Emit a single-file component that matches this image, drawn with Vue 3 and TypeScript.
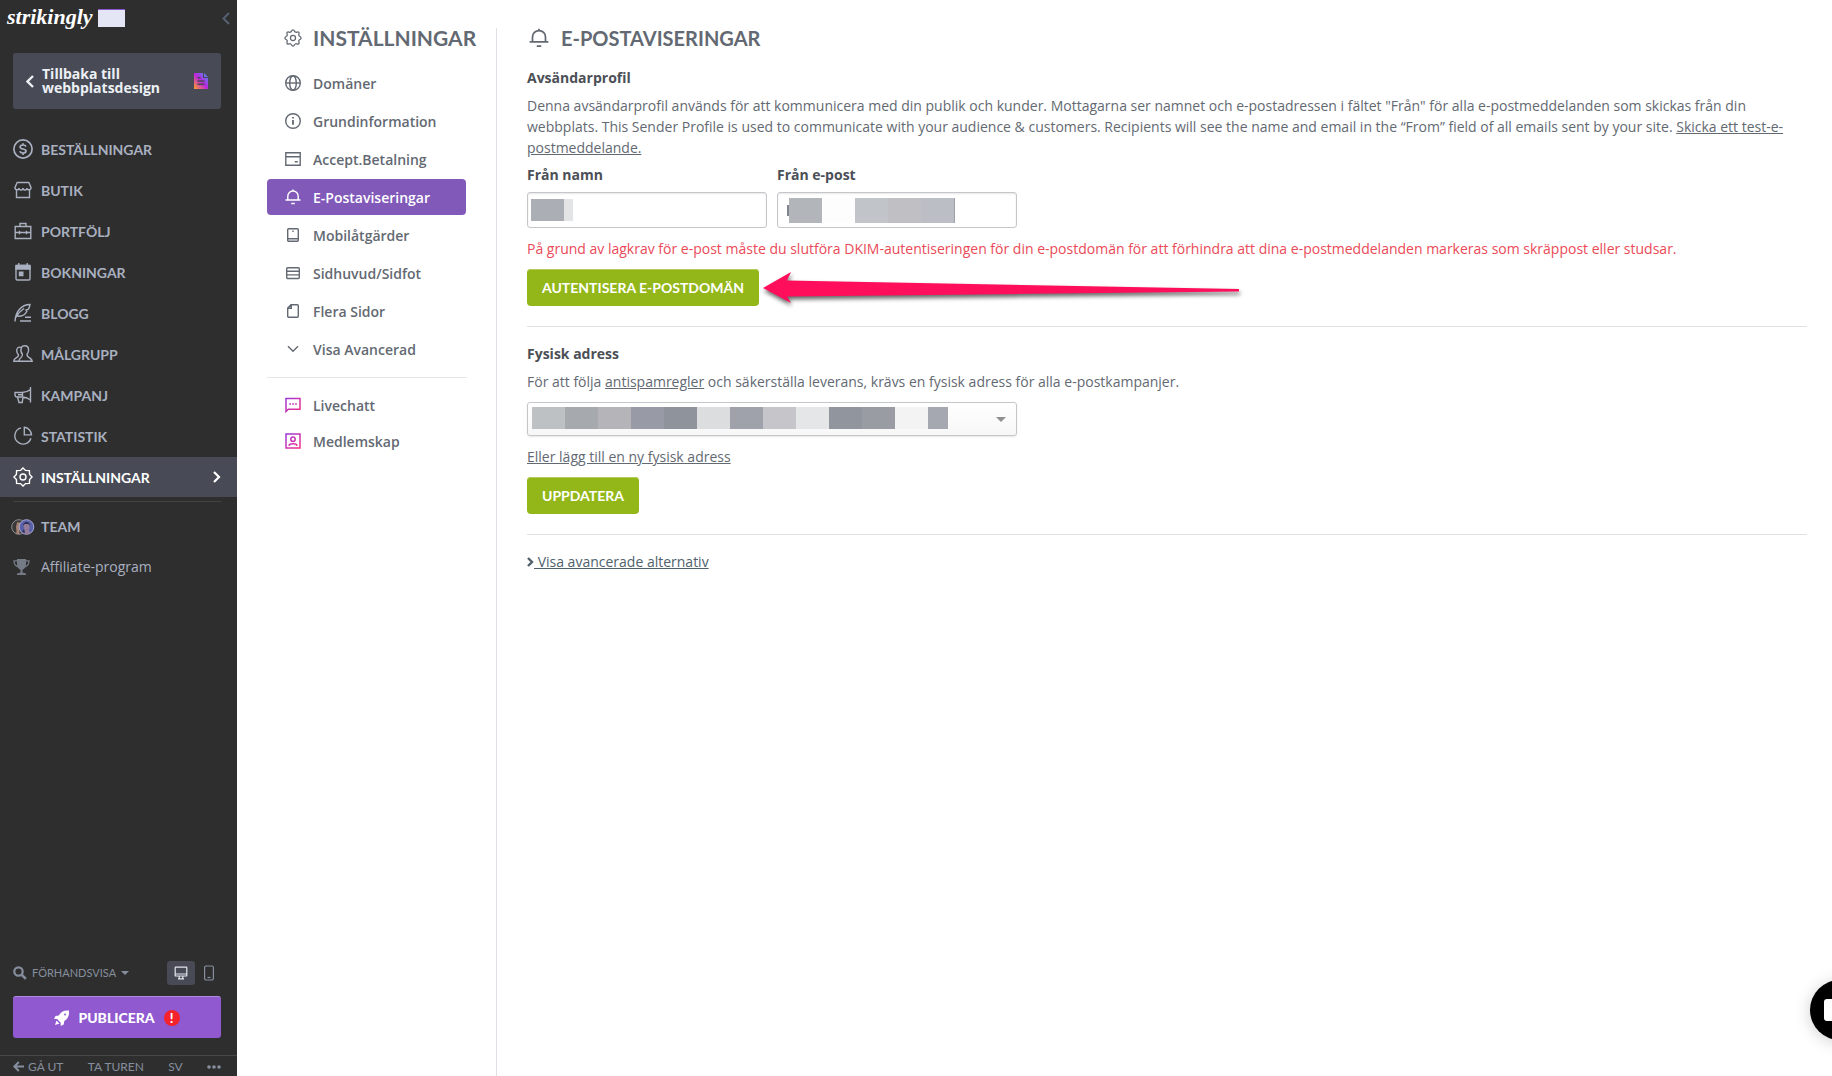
<script setup lang="ts">
import { ref } from 'vue'

interface MenuItem {
  label: string
  icon: string
  active?: boolean
}

const mainMenu: MenuItem[] = [
  {
    label: 'BESTÄLLNINGAR',
    icon: '<circle cx="10" cy="10" r="9.1" stroke-width="1.700"/><path stroke-width="1.700" d="M13 7.6C12.6 6.5 11.5 6 10 6c-1.700 0-2.900.7-2.900 2s1.200 1.700 2.900 2 3 .7 3 2-1.300 2-3 2-2.800-.6-3.200-1.700M10 4.200V6m0 8v1.900"/>',
  },
  {
    label: 'BUTIK',
    icon: '<path d="M4.200 2.500h11.600l2.200 5c0 3-4 3-4 .5 0 2.700-4 2.700-4 0 0 2.700-4 2.700-4 0 0 2.500-4 2.500-4-.5zM3.500 10v7.500h13V10"/>',
  },
  {
    label: 'PORTFÖLJ',
    icon: '<path d="M2.200 5.500h15.600v12H2.200zM7 5.500v-3h6v3M2.200 11.500h15.600M6.500 9.800v3.400M13.500 9.800v3.400"/>',
  },
  {
    label: 'BOKNINGAR',
    icon: '<rect x="3" y="3.500" width="14" height="14.500" rx="1.200"/><path fill="currentColor" d="M3 3.500h14v3.500H3zM6.500 10.300h3.300v3.300H6.500z"/><path d="M5.800 1v3M14.200 1v3"/>',
  },
  {
    label: 'BLOGG',
    icon: '<path d="M2 18.500C2.500 9 8 1.500 17 1.500c-.2 2.300-.8 3.800-2 5l-2 .6 1 .9c-2 4.500-5.500 5.500-9.500 5.300M2.800 14.500C5 10.500 8 7.500 11 5.500M12 14.200h6M7 18h11" />',
  },
  {
    label: 'MÅLGRUPP',
    icon: '<path d="M11.800 1.800c2.500 0 3.800 1.700 3.800 4.200 0 2-.8 3.300-1.500 4.200-.4 2.400.7 2.800 2.700 3.800 1.600.8 2.300 1.600 2.400 3.300H.8c0-1.700.7-2.500 2-3.200 2.300-1.200 3-1.700 2.600-3.500C4.500 9.800 3.700 8.700 3.700 7c0-2.400 1.200-3.900 3-3.900.8 0 1.200.2 1.600.5.500-1.100 1.700-1.800 3.500-1.800zM8.300 3.600C7.500 6 8 8.500 9.400 10.200c.4 2.300-.4 2.800-1.800 3.800-1.200.8-1.600 1.700-1.600 3.300"/>',
  },
  {
    label: 'KAMPANJ',
    icon: '<path d="M17.500 2v15.500M17.500 4.500C15 6.500 12.500 7.500 9 7.500H2v2.200c0 1.500.9 2.300 2.300 2.300H9c3.500 0 6 1 8.500 3M9.500 7.500V12M4.500 12l1.500 5.500h3.200L10 12M5 9.800h4"/>',
  },
  {
    label: 'STATISTIK',
    icon: '<path d="M8 1.900a8.200 8.200 0 1 0 9.900 10.300M11.300 1.300a8 8 0 0 1 7.200 7.600h-7.200z"/>',
  },
  {
    label: 'INSTÄLLNINGAR',
    active: true,
    icon: '<circle cx="10" cy="10" r="3"/><path d="M10 .9l2.500 2.500 3.900.2.200 3.900L19.100 10l-2.500 2.500-.2 3.900-3.900.2L10 19.100l-2.500-2.500-3.900-.2-.2-3.900L.9 10l2.500-2.500.2-3.900 3.900-.2z"/>',
  },
]

const settingsMenu: MenuItem[] = [
  {
    label: 'Domäner',
    icon: '<circle cx="8" cy="8" r="7.300"/><ellipse cx="8" cy="8" rx="3.300" ry="7.300"/><path d="M1 8h14"/>',
  },
  {
    label: 'Grundinformation',
    icon: '<circle cx="8" cy="8" r="7.300"/><path d="M8 7v4.800M8 4v1.600" stroke-width="1.800"/>',
  },
  {
    label: 'Accept.Betalning',
    icon: '<path d="M.8 1.700h14.400v12.600H.8zM.8 5.700h14.400M9.800 10.700h3"/>',
  },
  {
    label: 'E-Postaviseringar',
    active: true,
    icon: '<path d="M.5 11h15M2.800 11V7.200a5.200 5.200 0 0 1 10.400 0V11M8 .5V2M6.200 14.500h3.600"/>',
  },
  {
    label: 'Mobilåtgärder',
    icon: '<rect x="2.700" y="1.700" width="10.600" height="12.600" rx="1"/><path d="M3 11.800h10M7.300 4.300h1.400"/>',
  },
  {
    label: 'Sidhuvud/Sidfot',
    icon: '<rect x="1.700" y="2.700" width="12.600" height="10.800" rx="1"/><path d="M1.700 6.200h12.600M1.700 9.900h12.600"/>',
  },
  {
    label: 'Flera Sidor',
    icon: '<path d="M6 1.700h6.300a1 1 0 0 1 1 1v10.600a1 1 0 0 1-1 1H3.700a1 1 0 0 1-1-1V5zM6.300 2v3.300H3"/>',
  },
  {
    label: 'Visa Avancerad',
    icon: '<path d="M3 5.200l5 5 5-5"/>',
  },
]

const addOns: MenuItem[] = [
  {
    label: 'Livechatt',
    icon: '<path d="M1 14.500V1.500h14v10.700H3.300zM4.300 7h1.700M7.200 7h1.700M10.100 7h1.700"/>',
  },
  {
    label: 'Medlemskap',
    icon: '<rect x="1" y="1" width="14" height="14"/><circle cx="8" cy="6.200" r="2.200"/><path d="M3.800 12.800c1-2.600 7.400-2.600 8.400 0"/>',
  },
]

const bell = settingsMenu[3].icon

const addressBlocks: string[] = [
  '#bdc1c4', '#a6a9ae', '#b4b4b9', '#989ba5', '#8f939c', '#dcdddf', '#9fa2aa',
  '#c5c5ca', '#e5e6e8', '#91959e', '#999ca3', '#f3f3f3', '#a5a8b1',
]

const senderName = ref('')
const senderEmail = ref('')
const address = ref('')
</script>

<template>
  <div class="app">
    <aside class="sidebar">
      <header class="brand">
        <a href="#" class="logo">strikingly</a>
        <span class="plan"></span>
        <button class="collapse" type="button" aria-label="Fäll ihop">
          <svg width="8" height="13" viewBox="0 0 8 13"><path d="M7 1L1.500 6.500 7 12" fill="none" stroke="currentColor" stroke-width="2" /></svg>
        </button>
      </header>

      <a href="#" class="back">
        <svg width="8" height="13" viewBox="0 0 8 13"><path d="M7 1L1.500 6.500 7 12" fill="none" stroke="currentColor" stroke-width="2.400" /></svg>
        <span class="back-text">Tillbaka till webbplatsdesign</span>
        <svg width="14" height="16" viewBox="0 0 14 16">
          <defs>
            <linearGradient id="page" x1="0" y1="1" x2="1" y2="0">
              <stop offset="0" stop-color="#ffa321" /><stop offset=".5" stop-color="#bd24df" /><stop offset="1" stop-color="#4299f5" />
            </linearGradient>
          </defs>
          <path fill="url(#page)" d="M0 0h9v5h5v11H0zM10 0l4 4h-4z" />
          <path stroke="#484b56" stroke-width="1.500" d="M3.500 4.800h3M3.500 8h7M3.500 11.200h7" />
        </svg>
      </a>

      <nav class="main-nav">
        <a v-for="item in mainMenu" :key="item.label" href="#" class="nav-link" :class="{ active: item.active }">
          <svg class="line-icon" width="20" height="20" viewBox="0 0 20 20" v-html="item.icon"></svg>
          <span>{{ item.label }}</span>
          <svg v-if="item.active" class="nav-arrow" width="8" height="12" viewBox="0 0 8 12"><path d="M1 1l5 5-5 5" fill="none" stroke="currentColor" stroke-width="2.200" /></svg>
        </a>
      </nav>
      <nav class="extra-nav">
        <a href="#" class="nav-link team">
          <svg width="24" height="16" viewBox="0 0 24 16">
            <circle cx="8" cy="8" r="7.300" fill="#3c3836" stroke="#8b8e96" />
            <path d="M6 3.500c3-1 4.500 1 4.200 4.500L8.500 11v4h-4c2-2 .5-5 .5-7z" fill="#a38476" />
            <circle cx="15.500" cy="8" r="7.300" fill="#5a60a8" stroke="#a6a9d5" />
            <path d="M12.500 6c0-4 6-4 6 0v3.500l-1 2 2.500 2.200-4.500 1.500-4.500-1.500 2.500-2z" fill="#937b99" />
            <path d="M12 7c0-5.500 7-5.500 7 0l-1.500-2h-4zM11 13l2-3 1 4z" fill="#272d56" />
          </svg>
          <span>TEAM</span>
        </a>
        <a href="#" class="nav-link affiliate">
          <svg width="18" height="18" viewBox="0 0 18 18">
            <path fill="#747b86" d="M4 1h9v5c0 3-1.500 5-3.500 5.700v2.800l3.500 1V17H4v-1.500l3.500-1v-2.800C5.500 11 4 9 4 6z" />
            <path fill="none" stroke="#747b86" stroke-width="1.300" d="M4 2.800H1c0 4 2 5.700 4.500 6M13 2.800h3c0 4-2 5.700-4.500 6" />
          </svg>
          <span>Affiliate-program</span>
        </a>
      </nav>

      <div class="bottom">
        <div class="preview">
          <button type="button" class="preview-btn">
            <svg width="14" height="14" viewBox="0 0 14 14"><circle cx="5.500" cy="5.500" r="4.200" fill="none" stroke="currentColor" stroke-width="2.200" /><path d="M8.800 8.800l4 4" stroke="currentColor" stroke-width="2.600" /></svg>
            <span>FÖRHANDSVISA</span>
            <i class="caret"></i>
          </button>
          <button type="button" class="device on" aria-label="Dator">
            <svg width="14" height="14" viewBox="0 0 14 14" fill="none" stroke="currentColor" stroke-width="1.200"><rect x="1.200" y="1.200" width="11.600" height="8.800" rx=".6" /><path d="M1 8h12M5.200 10v2.500M8.800 10v2.500M4 12.800h6" /></svg>
          </button>
          <button type="button" class="device" aria-label="Mobil">
            <svg width="12" height="16" viewBox="0 0 12 16" fill="none" stroke="currentColor" stroke-width="1.200"><rect x="1.600" y="1" width="8.800" height="14" rx="1.600" /><path d="M4.500 12.500h3" /></svg>
          </button>
        </div>
        <button type="button" class="publish">
          <svg width="15" height="16" viewBox="0 0 15 16" fill="currentColor"><path d="M15 .5C10 0 6.500 2 4.800 5.500L1.500 6 0 9h3.200l3.500 3.800V16l3-1.600.6-3.400C13.800 9 15.500 5.500 15 .5zM2.500 10.500L1 15l4.500-1.500z" /><circle cx="11" cy="4.500" r="1" fill="#9059d0" /></svg>
          <span>PUBLICERA</span>
          <b class="alert">!</b>
        </button>
        <footer class="foot">
          <a href="#" class="leave"><svg width="11" height="11" viewBox="0 0 11 11"><path d="M11 5.500H1.500M5.800 1L1.400 5.500 5.800 10" fill="none" stroke="currentColor" stroke-width="2" /></svg>GÅ UT</a>
          <a href="#">TA TUREN</a>
          <a href="#">SV</a>
          <a href="#" aria-label="Mer"><svg width="14" height="4" viewBox="0 0 14 4" fill="currentColor"><circle cx="2" cy="2" r="1.800" /><circle cx="7" cy="2" r="1.800" /><circle cx="12" cy="2" r="1.800" /></svg></a>
        </footer>
      </div>
    </aside>

    <section class="settings">
      <h2 class="settings-title">
        <svg class="line-icon" width="18" height="18" viewBox="0 0 20 20"><circle cx="10" cy="10" r="2.800" /><path d="M10 1c1.800 0 1.500 2.300 3 2.600 1.200.3 2.300-1 3.400 0 1.200 1.200-.3 2.200 0 3.400C16.800 8.500 19 8.200 19 10s-2.200 1.500-2.600 3c-.3 1.200 1.200 2.200 0 3.400-1.100 1.100-2.200-.3-3.400 0-1.500.4-1.200 2.600-3 2.600s-1.500-2.200-3-2.600c-1.200-.3-2.300 1.100-3.400 0-1.200-1.200.3-2.200 0-3.400C3.200 11.500 1 11.800 1 10s2.200-1.500 2.600-3c.3-1.200-1.200-2.200 0-3.400C4.700 2.600 5.800 3.900 7 3.600 8.500 3.300 8.200 1 10 1z" /></svg>
        <span>INSTÄLLNINGAR</span>
      </h2>
      <nav class="settings-nav">
        <a v-for="item in settingsMenu" :key="item.label" href="#" class="set-link" :class="{ active: item.active }">
          <svg class="line-icon" width="16" height="16" viewBox="0 0 16 16" v-html="item.icon"></svg>
          <span>{{ item.label }}</span>
        </a>
      </nav>
      <nav class="addons">
        <a v-for="item in addOns" :key="item.label" href="#" class="set-link">
          <svg class="gradient-icon" width="16" height="16" viewBox="0 0 16 16" v-html="item.icon"></svg>
          <span>{{ item.label }}</span>
        </a>
      </nav>
      <svg class="defs" width="0" height="0" aria-hidden="true">
        <linearGradient id="violet-pink" gradientUnits="userSpaceOnUse" x1="0" y1="0" x2="16" y2="16">
          <stop offset="0" stop-color="#9636e0" /><stop offset="1" stop-color="#fb2f82" />
        </linearGradient>
      </svg>
    </section>

    <main class="content">
      <h1 class="content-title">
        <svg class="line-icon" width="20" height="20" viewBox="0 0 16 16" v-html="bell"></svg>
        <span>E-POSTAVISERINGAR</span>
      </h1>

      <section class="block">
        <h3>Avsändarprofil</h3>
        <p>
          Denna avsändarprofil används för att kommunicera med din publik och kunder. Mottagarna ser namnet och e-postadressen i fältet "Från" för alla e-postmeddelanden som skickas från din webbplats. This Sender Profile is used to communicate with your audience &amp; customers. Recipients will see the name and email in the “From” field of all emails sent by your site.
          <a href="#">Skicka ett test-e-postmeddelande.</a>
        </p>
        <div class="fields">
          <div class="field">
            <label for="from-name">Från namn</label>
            <div class="control">
              <input id="from-name" v-model="senderName" type="text" />
              <span class="mosaic name-mosaic"><i></i><i></i></span>
            </div>
          </div>
          <div class="field">
            <label for="from-email">Från e-post</label>
            <div class="control">
              <input id="from-email" v-model="senderEmail" type="email" />
              <span class="mosaic email-mosaic"><i></i><i></i><i></i><i></i><i></i><i></i></span>
            </div>
          </div>
        </div>
        <p class="warning">På grund av lagkrav för e-post måste du slutföra DKIM-autentiseringen för din e-postdomän för att förhindra att dina e-postmeddelanden markeras som skräppost eller studsar.</p>
        <div class="action">
          <button type="button" class="green">AUTENTISERA E-POSTDOMÄN</button>
          <svg class="arrow" width="488" height="44" viewBox="0 0 488 44"><path fill="#ff0f5b" d="M3 22L31 6l-4 8.500L479 23v2.500L27 30.500 31 37z" /></svg>
        </div>
      </section>

      <section class="block address">
        <h3><label for="address">Fysisk adress</label></h3>
        <p>För att följa <a href="#">antispamregler</a> och säkerställa leverans, krävs en fysisk adress för alla e-postkampanjer.</p>
        <div class="control select-control">
          <select id="address" v-model="address"><option value=""></option></select>
          <span class="mosaic address-mosaic"><i v-for="(color, n) in addressBlocks" :key="n" :style="{ background: color }"></i></span>
          <i class="select-caret"></i>
        </div>
        <p><a href="#">Eller lägg till en ny fysisk adress</a></p>
        <button type="button" class="green">UPPDATERA</button>
      </section>

      <a href="#" class="more"><svg width="7" height="10" viewBox="0 0 7 10"><path d="M1 1l4 4-4 4" fill="none" stroke="currentColor" stroke-width="2.400" /></svg><span>&nbsp;Visa avancerade alternativ</span></a>
    </main>

    <button type="button" class="chat" aria-label="Chatt"><i></i></button>
  </div>
</template>

<style>
body {
  margin: 0;
  overflow: hidden;
  background: #fff;
}
</style>

<style scoped>
* {
  box-sizing: border-box;
}

.app {
  position: relative;
  display: flex;
  min-height: 100vh;
  overflow: hidden;
  font: 14px/21px "Open Sans", sans-serif;
  color: #636972;
}

a {
  color: inherit;
}

button {
  padding: 0;
  border: 0;
  background: none;
  color: inherit;
  font: inherit;
  cursor: pointer;
}

svg {
  display: block;
  flex: none;
}

h1,
h2,
h3,
p {
  margin: 0;
}

.line-icon {
  fill: none;
  stroke: currentColor;
  stroke-width: 1.400;
}

/* Sidebar */
.sidebar {
  display: flex;
  flex: none;
  flex-direction: column;
  width: 237px;
  background: #2e2e2e;
  color: #a9b0c0;
}

.sidebar a {
  text-decoration: none;
}

.brand {
  display: flex;
  align-items: center;
  height: 36px;
  padding: 0 7px;
}

.logo {
  width: 91px;
  padding-bottom: 2px;
  color: #fff;
  font: italic 700 22px/32px "Liberation Serif", serif;
}

.plan {
  width: 27px;
  height: 18px;
  border-top: 1px solid #8d55cd;
  background: #e4e5f5;
}

.collapse {
  margin-left: auto;
  color: #566073;
}

.back {
  display: flex;
  align-items: center;
  gap: 8px;
  height: 56px;
  margin: 17px 16px 20px 13px;
  padding: 0 13px 0 13px;
  border-radius: 3px;
  background: #484b56;
  color: #edf0f5;
  font-weight: 700;
  line-height: 14px;
}

.back-text {
  flex: 1;
}

.nav-link {
  display: flex;
  align-items: center;
  gap: 8px;
  height: 40px;
  margin-bottom: 1px;
  padding: 0 16px 0 13px;
  font: 700 14px/20px Lato, sans-serif;
}

.main-nav span {
  padding-top: 2px;
}

.nav-link.active {
  background: #484b56;
  color: #fff;
}

.nav-arrow {
  margin-left: auto;
}

.extra-nav {
  margin: 3px 16px 0 13px;
  padding-top: 5px;
  border-top: 1px solid #434343;
}

.extra-nav .nav-link {
  margin: 0;
  padding: 0;
}

.team svg {
  margin-left: -2px;
}

.extra-nav .team {
  gap: 6px;
}

.extra-nav .affiliate {
  gap: 10px;
  font: 400 14px/20px "Open Sans", sans-serif;
}

.bottom {
  margin-top: auto;
}

.preview {
  display: flex;
  align-items: center;
  height: 24px;
  margin: 0 14px 11px 13px;
  color: #868e9e;
}

.preview-btn {
  display: flex;
  align-items: center;
  gap: 5px;
  margin-right: auto;
  font: 400 11px/16px Lato, sans-serif;
}

.caret {
  border: 4px solid transparent;
  border-top-color: currentColor;
  border-bottom: 0;
}

.device {
  display: grid;
  place-items: center;
  width: 28px;
  height: 24px;
  border-radius: 3px;
}

.device.on {
  background: #484b56;
  color: #e3e6eb;
}

.publish {
  display: flex;
  align-items: center;
  justify-content: center;
  gap: 9px;
  width: 208px;
  height: 42px;
  margin: 0 13px 17px;
  border-top: 1px solid #b38be2;
  border-radius: 3px;
  background: #9059d0;
  color: #fff;
  font: 900 14px/20px Lato, sans-serif;
}

.alert {
  width: 16px;
  height: 16px;
  border-radius: 50%;
  background: #f4222d;
  font: 900 13px/16px Lato, sans-serif;
}

.foot {
  display: flex;
  align-items: center;
  justify-content: space-between;
  height: 21px;
  padding: 1px 16px 0 13px;
  border-top: 1px solid #484848;
  color: #868e9e;
  font: 400 12px/16px Lato, sans-serif;
}

.leave {
  display: flex;
  align-items: center;
  gap: 4px;
}

/* Settings column */
.settings {
  flex: none;
  width: 260px;
  margin-top: 28px;
  padding-left: 30px;
  border-right: 1px solid #dfe0e6;
}

.settings-title,
.content-title {
  display: flex;
  align-items: center;
  height: 20px;
  font: 700 21px/20px Lato, sans-serif;
  color: #636972;
}

.settings-title {
  gap: 11px;
  padding-left: 17px;
}

.settings-nav {
  width: 200px;
  margin-top: 17px;
  padding-bottom: 8px;
  border-bottom: 1px solid #e6e6e8;
}

.addons {
  margin-top: 9px;
}

.set-link {
  display: flex;
  align-items: center;
  gap: 12px;
  width: 199px;
  height: 36px;
  margin-bottom: 2px;
  padding-left: 18px;
  border-radius: 4px;
  font-weight: 600;
  text-decoration: none;
}

.set-link.active {
  background: #8159b9;
  color: #fff;
}

.addons .set-link {
  margin: 0;
}

.gradient-icon {
  fill: none;
  stroke: url(#violet-pink);
  stroke-width: 1.500;
}

.defs {
  position: absolute;
}

/* Content */
.content {
  flex: 1;
  min-width: 0;
  padding: 28px 25px 0 30px;
}

.content-title {
  gap: 12px;
  margin-bottom: 19px;
  padding-left: 2px;
  font-size: 20px;
}

.block {
  padding-bottom: 20px;
  border-bottom: 1px solid #e1e1e1;
}

h3,
.field label {
  color: #4b4f56;
  font-size: 14px;
  font-weight: 700;
  line-height: 21px;
}

h3 {
  margin-bottom: 7px;
}

.fields {
  display: flex;
  gap: 10px;
  margin: 6px 0 10px;
}

.field {
  width: 240px;
}

.field label {
  display: block;
  margin-bottom: 7px;
}

.control {
  position: relative;
}

input,
select {
  display: block;
  width: 100%;
  height: 36px;
  padding: 0 10px;
  border: 1px solid #c5c6ca;
  border-radius: 3px;
  background: #fff;
  box-shadow: inset 0 1px 2px #0000001a;
  font: inherit;
}

.mosaic {
  position: absolute;
  top: 7px;
  left: 4px;
  display: flex;
  height: 22px;
}

.mosaic i {
  width: 33px;
}

.name-mosaic i {
  background: #abaeb4;
}

.name-mosaic i:last-child {
  width: 9px;
  background: #e3e4e6;
}

.email-mosaic {
  top: 6px;
  left: 10px;
  height: 25px;
}

.email-mosaic i:nth-child(1) {
  width: 2px;
  height: 11px;
  margin-top: 7px;
  background: #81858f;
}

.email-mosaic i:nth-child(2) {
  background: #b2b5ba;
}

.email-mosaic i:nth-child(3) {
  background: #fdfdfd;
}

.email-mosaic i:nth-child(4) {
  background: #c1c5c9;
}

.email-mosaic i:nth-child(5) {
  background: #bfbfc4;
}

.email-mosaic i:nth-child(6) {
  width: 34px;
  border-right: 1px solid #9b9fa8;
  background: #bbbfc5;
}

.warning {
  margin-bottom: 10px;
  color: #ea4a57;
}

.action {
  position: relative;
}

.green {
  display: block;
  height: 37px;
  padding: 0 15px;
  border-radius: 4px;
  background: #93b719;
  box-shadow: inset 0 2px 0 -1px #b1cc5b;
  color: #fff;
  font: 700 14px/20px Lato, sans-serif;
}

.arrow {
  position: absolute;
  top: -3px;
  left: 233px;
  filter: drop-shadow(1px 3px 2px #00000099);
}

.address {
  padding-top: 16px;
}

.select-control {
  width: 490px;
  margin: 10px 0;
}

select {
  height: 34px;
  appearance: none;
  background: linear-gradient(#fff, #f7f7f7);
  box-shadow: 0 1px 2px #0000001a;
}

.address-mosaic {
  top: 5px;
  left: 5px;
}

.address-mosaic i:last-child {
  width: 20px;
}

.select-caret {
  position: absolute;
  top: 15px;
  right: 11px;
  border: 5px solid transparent;
  border-top-color: #909090;
  border-bottom: 0;
}

.address .green {
  margin-top: 10px;
}

.more {
  display: inline-flex;
  align-items: center;
  margin-top: 16px;
  color: #50616b;
  text-decoration: none;
}

.more span {
  text-decoration: underline;
}

/* Chat launcher */
.chat {
  position: absolute;
  right: -38px;
  bottom: 36px;
  width: 60px;
  height: 60px;
  border-radius: 50%;
  background: #000;
  box-shadow: 0 2px 16px #00000030;
}

.chat i {
  display: block;
  width: 32px;
  height: 22px;
  margin: 0 auto;
  border-radius: 3px;
  background: #fff;
}
</style>
